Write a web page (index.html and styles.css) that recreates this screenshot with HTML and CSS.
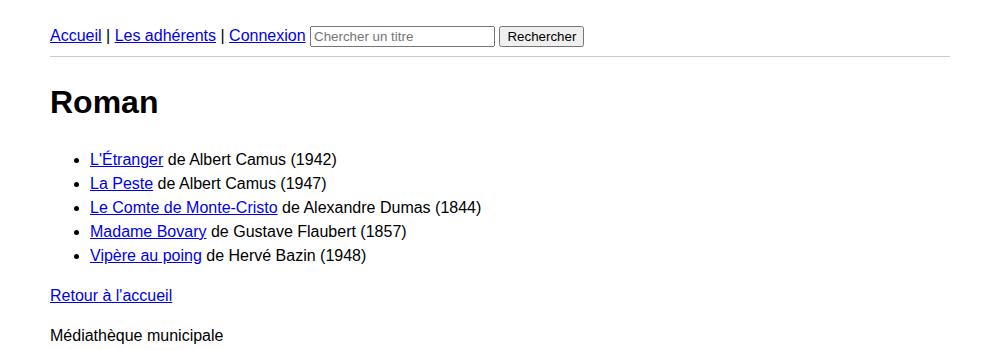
FILE: index.html
```html
<!DOCTYPE html>
<html lang="fr">
<head>
    <meta charset="UTF-8">
    <title>Roman - Médiathèque municipale</title>
    <link rel="stylesheet" href="styles.css">
</head>
<body>
    <div class="page">
        <nav class="top-nav">
            <a href="#">Accueil</a> |
            <a href="#">Les adhérents</a> |
            <a href="#">Connexion</a>
            <form class="search-form" action="#">
                <input type="text" name="q" class="search-input" placeholder="Chercher un titre">
                <button type="submit">Rechercher</button>
            </form>
        </nav>

        <h1>Roman</h1>

        <ul class="book-list">
            <li><a href="#">L'Étranger</a> de Albert Camus (1942)</li>
            <li><a href="#">La Peste</a> de Albert Camus (1947)</li>
            <li><a href="#">Le Comte de Monte-Cristo</a> de Alexandre Dumas (1844)</li>
            <li><a href="#">Madame Bovary</a> de Gustave Flaubert (1857)</li>
            <li><a href="#">Vipère au poing</a> de Hervé Bazin (1948)</li>
        </ul>

        <p><a href="#">Retour à l'accueil</a></p>

        <footer>
            <p>Médiathèque municipale</p>
        </footer>
    </div>
</body>
</html>
```

FILE: styles.css
```css
body {
    margin: 0;
    font-family: 'Liberation Sans', Arial, sans-serif;
    font-size: 16px;
    line-height: 1.5;
    color: #000;
}

.page {
    max-width: 900px;
    margin: 0 auto;
    padding: 24px 0;
}

.top-nav {
    padding-bottom: 8px;
    border-bottom: 1px solid #ccc;
}

.search-form {
    display: inline;
}

.search-input {
    width: 185px;
    box-sizing: border-box;
    font-family: 'Liberation Sans', Arial, sans-serif;
}

.search-form button {
    font-family: 'Liberation Sans', Arial, sans-serif;
}

h1 {
    font-size: 32px;
}
```
